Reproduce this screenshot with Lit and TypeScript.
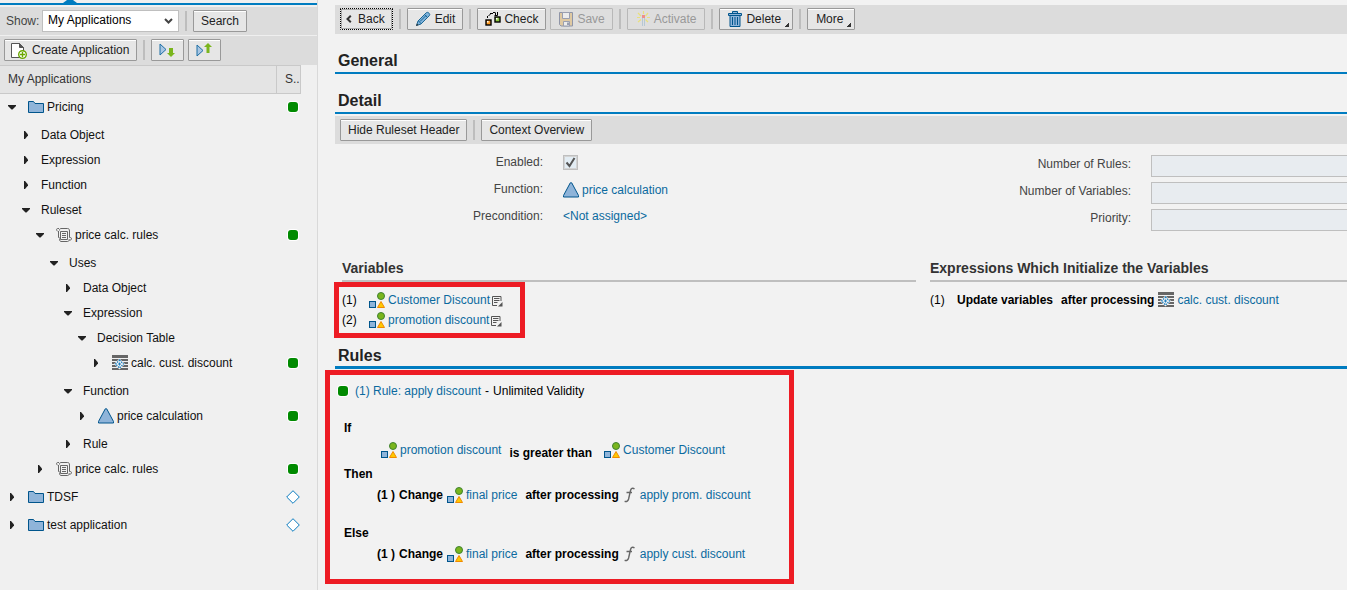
import { LitElement, html, css, svg, nothing, TemplateResult } from "lit";
import { customElement } from "lit/decorators.js";
import { classMap } from "lit/directives/class-map.js";
import { styleMap } from "lit/directives/style-map.js";

type IconName =
  | "folder" | "ruleset" | "table" | "triangle" | "shapes" | "note" | "func"
  | "newdoc" | "expand" | "collapse" | "back" | "pencil" | "check" | "save"
  | "wand" | "trash" | "diamond";

const glyphs: Record<IconName, { w: number; h: number; body: TemplateResult }> = {
  folder: { w: 16, h: 14, body: svg`
    <path d="M.5 12.500V1.500h5l1.500 2h8.500v9z" fill="#8fb4d9" stroke="#00558c"/>` },
  ruleset: { w: 16, h: 16, body: svg`
    <g fill="none" stroke="#666">
      <path d="M3.500 3.500c0-1.500.5-2 1.500-2h6.500c1.500 0 2 1 2 2.500v6.500M3 1.500H1.500c-1.200 0-1.200 2.500 0 2.500M2.500 4v6.500h1"/>
      <path d="M3.500 11.500c0 2 .5 3 1.500 3h6.500c1.500 0 1.500-1 1.500-2M13.500 10.500h1c1.300 0 1.300 2.500 0 2.500h-1.500"/>
      <path d="M4.500 4.500h7v8h-7z"/>
      <path d="M6 6.500h4M6 8.500h4M6 10.500h4"/>
    </g>` },
  table: { w: 16, h: 16, body: svg`
    <path d="M0 0h16v3H0zM0 4h16v2H0zM0 7h16v2H0zM0 10h16v2H0zM0 13h16v2H0z" fill="#666"/>
    <path d="M7.500 3.500l5.500 5.500-5.500 5.500L2 9z" fill="#f2f2f2"/>
    <path d="M7.500 5l4 4-4 4-4-4z" fill="none" stroke="#1c7fc0" stroke-width="1.300" stroke-dasharray="1.400 1"/>
    <path d="M7 7.500h1v1h1v1H8v1H7v-1H6v-1h1z" fill="#1c7fc0"/>` },
  triangle: { w: 16, h: 16, body: svg`
    <path d="M7.300.8h1.400L15.500 13.500v1.500H.5v-1.500z" fill="#8fb4d9" stroke="#00558c"/>` },
  shapes: { w: 16, h: 16, body: svg`
    <circle cx="12" cy="4" r="3.500" fill="#7ab51d" stroke="#3f8230"/>
    <rect x=".5" y="9.500" width="6" height="6" fill="#8fb4d9" stroke="#00558c"/>
    <path d="M12 9.500l3.500 6h-7z" fill="#ffc800" stroke="#f08a00"/>` },
  note: { w: 11, h: 11, body: svg`
    <path d="M5 9.500H.5v-9h8.500V5M2 2.500h5.500M2 4.500h5.500M2 6.500h3.500" fill="none" stroke="#555"/>
    <path d="M10.500 6v4.500H6z" fill="#555"/>` },
  func: { w: 11, h: 16, body: svg`
    <path d="M10.500 1.800C8.500.6 7 1.300 6.400 4L4.600 12c-.5 2-1.800 3-4 2.400M2.500 5.500h5.500" fill="none" stroke="#666" stroke-width="1.400"/>` },
  newdoc: { w: 17, h: 17, body: svg`
    <path d="M1.500 15.500V1.500h8l4 4v10z" fill="#fff" stroke="#555"/>
    <path d="M9.500 1.500l4 4h-4z" fill="#555" stroke="#555"/>
    <circle cx="12.500" cy="12.500" r="3.800" fill="#fff" stroke="#6aa800" stroke-width="1.400"/>
    <path d="M12.500 10v5M10 12.500h5" stroke="#6aa800" stroke-width="1.400"/>` },
  expand: { w: 16, h: 16, body: svg`
    <path d="M1 2l6 5.500L1 13z" fill="#a9c6e3" stroke="#1c6ea4"/>
    <path d="M10 6h4v5h2l-4 4-4-4h2z" fill="#7ab51d"/>` },
  collapse: { w: 16, h: 16, body: svg`
    <path d="M1 3l6 5.500L1 14z" fill="#a9c6e3" stroke="#1c6ea4"/>
    <path d="M10.500 11h3V5H16l-4-4-4 4h2.500z" fill="#7ab51d"/>` },
  back: { w: 6, h: 8, body: svg`
    <path d="M4.800.8L1.500 4l3.300 3.200" fill="none" stroke="#333" stroke-width="2"/>` },
  pencil: { w: 16, h: 16, body: svg`
    <path d="M1.500 14.500l1.500-4.500 8-8c1-1 2-.8 3 .2s1 1.800 0 2.800l-8 8z" fill="#7fb2da" stroke="#1b6796"/>
    <path d="M3.500 10l2.800 2.800M9.500 3.500l3 3M5 10.500l6-6" fill="none" stroke="#1b6796"/>
    <path d="M1 15l1-2.500L3.500 14z" fill="#333"/>` },
  check: { w: 16, h: 16, body: svg`
    <rect x="1" y="9" width="5" height="5" fill="#ff9a1f" stroke="#000" stroke-width="1.400"/>
    <rect x="10" y="6" width="5" height="5" fill="#8cc63f" stroke="#000" stroke-width="1.400"/>
    <path d="M2 10h1.500v1.500H2zM11 7h1.500v1.500H11z" fill="#fff"/>
    <path d="M2.500 7V5M3.500 4.500h1M4.500 3.500h1M5 2.500h3M8 1.500h2.500M10.500 2v2M12.500 1v3.500M9.500 4.500h3" fill="none" stroke="#000"/>` },
  save: { w: 16, h: 15, body: svg`
    <path d="M1.500.5h13v13.500H3L1.500 12.500z" fill="#dfc9a2" stroke="#8f95a8"/>
    <path d="M4.500.5h7v6h-7zM5.500 9.500h6v4.500h-6z" fill="#ececec" stroke="#9a9fb0"/>
    <path d="M9 10.500h2V13H9z" fill="#9a9fb0"/>` },
  wand: { w: 14, h: 16, body: svg`
    <path d="M6.500 7v8M8.500 7v8" stroke="#b5c8d4"/>
    <path d="M2 2l3 3M12 2L9.500 5M7.500 0v3M1 6.500h3M11 6.500h3M2 11l3-2.500M12 11l-2.500-2.500" stroke="#e9e07c" stroke-width="1.200"/>
    <path d="M6 4h3v3H6z" fill="#ee8f8a"/>` },
  trash: { w: 14, h: 16, body: svg`
    <path d="M4.500 2.500v-2h5v2M.5 2.500h13v2H.5zM2 5v10.500h10V5" fill="#8fb4d9" stroke="#00558c"/>
    <path d="M4.500 6v8M7 6v8M9.500 6v8" stroke="#00558c"/>` },
  diamond: { w: 14, h: 14, body: svg`
    <path d="M7 .7L13.300 7 7 13.300.7 7z" fill="#fff" stroke="#0a7cc0"/>` },
};

const icon = (name: IconName) => {
  const g = glyphs[name];
  return html`<svg class="icon" width=${g.w} height=${g.h} viewBox="0 0 ${g.w} ${g.h}" aria-hidden="true">${g.body}</svg>`;
};

interface Node {
  label: string;
  level: number;
  open?: boolean;
  icon?: IconName;
  status?: "active" | "inactive";
}

const tree: Node[] = [
  { label: "Pricing", level: 0, open: true, icon: "folder", status: "active" },
  { label: "Data Object", level: 1 },
  { label: "Expression", level: 1 },
  { label: "Function", level: 1 },
  { label: "Ruleset", level: 1, open: true },
  { label: "price calc. rules", level: 2, open: true, icon: "ruleset", status: "active" },
  { label: "Uses", level: 3, open: true },
  { label: "Data Object", level: 4 },
  { label: "Expression", level: 4, open: true },
  { label: "Decision Table", level: 5, open: true },
  { label: "calc. cust. discount", level: 6, icon: "table", status: "active" },
  { label: "Function", level: 4, open: true },
  { label: "price calculation", level: 5, icon: "triangle", status: "active" },
  { label: "Rule", level: 4 },
  { label: "price calc. rules", level: 2, icon: "ruleset", status: "active" },
  { label: "TDSF", level: 0, icon: "folder", status: "inactive" },
  { label: "test application", level: 0, icon: "folder", status: "inactive" },
];

const base = css`
  :host {
    font-family: "Liberation Sans", Arial, sans-serif;
    font-size: 12px;
    color: #222;
  }
  * { box-sizing: border-box; }
  .icon { display: block; flex: none; }
  .toolbar {
    display: flex;
    align-items: center;
    background: #dcdcdc;
  }
  .sep {
    width: 2px;
    height: 20px;
    margin: 0 6px;
    background: #bdbdbd;
  }
  .btn {
    display: flex;
    align-items: center;
    gap: 3px;
    height: 22px;
    padding: 0 7px;
    font: inherit;
    line-height: 14px;
    color: #222;
    white-space: nowrap;
    background: #e6e6e6;
    border: 1px solid #999;
    border-radius: 1px;
    box-shadow: inset 0 1px #fff;
  }
  .btn + .btn { margin-left: 4px; }
  .btn:disabled {
    color: #999;
    background: #dedede;
    border-color: #b8b8b8;
    box-shadow: none;
  }
  .dot {
    display: block;
    flex: none;
    width: 10px;
    height: 10px;
    border-radius: 3px;
    background: #008a00;
    box-shadow: 0 0 0 1px #fff;
  }
`;

@customElement("app-navigator")
export class AppNavigator extends LitElement {
  static styles = [base, css`
    :host {
      display: block;
      background: #f0f0f0;
      border-right: 1px solid #d9d9d9;
    }
    .tabline {
      height: 5px;
      padding-left: 63px;
      border-bottom: 2px solid #007cc0;
    }
    .pointer { display: block; fill: #007cc0; }
    .filter { margin-top: 2px; padding: 3px 6px; }
    .actions {
      padding: 3px 4px 4px;
      border-top: 1px solid #efefef;
    }
    .label { width: 36px; color: #444; }
    .picker {
      display: grid;
      align-items: center;
      width: 137px;
    }
    .picker > * { grid-area: 1 / 1; }
    .select {
      appearance: none;
      width: 100%;
      height: 22px;
      padding: 0 5px 2px;
      font: inherit;
      color: #000;
      background: #fff;
      border: 1px solid #bfbfbf;
      border-radius: 0;
    }
    .chevron {
      justify-self: end;
      margin-right: 6px;
      pointer-events: none;
    }
    .create { padding: 0 7px 0 5px; gap: 5px; }
    .tool { padding: 0 8px 0 7px; }
    .tree {
      width: 301px;
      table-layout: fixed;
      border-collapse: separate;
      border-spacing: 0;
    }
    .head {
      height: 29px;
      padding: 0 0 2px 8px;
      font-weight: normal;
      text-align: left;
      color: #333;
      background: #e4e4e4;
      border: solid #c9c9c9;
      border-width: 1px 1px 1px 0;
    }
    .head.status { width: 24px; }
    .cell { padding: 5px 0 4px; }
    .big .cell { padding-bottom: 7px; }
    .item {
      display: flex;
      align-items: center;
      height: 16px;
      white-space: nowrap;
      color: #111;
    }
    .item .icon { margin: 0 3px 0 1px; }
    .twisty {
      display: flex;
      justify-content: center;
      align-items: center;
      width: 12px;
      height: 12px;
      margin-right: 9px;
      padding: 0;
      border: 0;
      background: none;
    }
    .mark {
      display: flex;
      align-items: center;
      justify-content: center;
      height: 16px;
      padding-left: 8px;
    }
  `];

  private row(n: Node) {
    return html`
      <tr class=${classMap({ big: !!n.icon })} aria-level=${n.level + 1}>
        <td class="cell">
          <div class="item" style=${styleMap({ paddingLeft: `${6 + 14 * n.level}px` })}>
            <button class="twisty" aria-expanded=${n.open ? "true" : "false"} aria-label=${n.label}>
              ${n.open
                ? html`<svg width="8" height="5" viewBox="0 0 8 5"><path d="M0 0h8v1L4.500 4.500h-1L0 1z" fill="#222"/></svg>`
                : html`<svg width="4" height="8" viewBox="0 0 4 8"><path d="M0 0h1l3 3.500v1L1 8H0z" fill="#222"/></svg>`}
            </button>
            ${n.icon ? icon(n.icon) : nothing}<span>${n.label}</span>
          </div>
        </td>
        <td class="cell">
          <div class="mark">
            ${n.status === "active" ? html`<span class="dot"></span>` : nothing}
            ${n.status === "inactive" ? icon("diamond") : nothing}
          </div>
        </td>
      </tr>`;
  }

  render() {
    return html`
      <div class="tabline">
        <svg class="pointer" width="14" height="3" viewBox="0 0 14 3"><path d="M4 0h6l4 3H0z"/></svg>
      </div>
      <div class="toolbar filter">
        <label class="label" for="scope">Show:</label>
        <span class="picker">
          <select class="select" id="scope"><option>My Applications</option></select>
          <svg class="chevron" width="9" height="6" viewBox="0 0 9 6"><path d="M1 1l3.500 3.500L8 1" fill="none" stroke="#444" stroke-width="2"/></svg>
        </span>
        <span class="sep"></span>
        <button class="btn">Search</button>
      </div>
      <div class="toolbar actions">
        <button class="btn create">${icon("newdoc")}Create Application</button>
        <span class="sep"></span>
        <button class="btn tool" aria-label="Expand">${icon("expand")}</button>
        <button class="btn tool" aria-label="Collapse">${icon("collapse")}</button>
      </div>
      <table class="tree">
        <thead>
          <tr><th class="head">My Applications</th><th class="head status">S..</th></tr>
        </thead>
        <tbody>${tree.map((n) => this.row(n))}</tbody>
      </table>`;
  }
}

@customElement("ruleset-editor")
export class RulesetEditor extends LitElement {
  static styles = [base, css`
    :host {
      display: block;
      min-width: 0;
      padding: 5px 0 6px 17px;
      background: #f2f2f2;
    }
    .main { padding: 3px 5px 4px; }
    .sub { margin-top: 2px; padding: 3px 5px; }
    .focused {
      border: 1px dotted #000;
      outline: 1px solid #aaa;
      outline-offset: -2px;
    }
    .back { padding: 0 7px 0 5px; gap: 6px; }
    .menu {
      padding: 0 11px 0 8px;
      background: linear-gradient(135deg, transparent 50%, #333 50%) right 3px bottom 2px / 5px 5px no-repeat #e6e6e6;
    }
    .menu .icon { margin-right: 1px; }
    .edit .icon { margin-right: 1px; }
    .wand { padding: 0 8px; gap: 4px; }
    .title {
      margin: 18px 0 0;
      padding: 0 3px 2px;
      font-size: 16px;
      line-height: 18px;
      border-bottom: 2px solid #007cc0;
    }
    .title.strong {
      margin-top: 9px;
      padding-bottom: 1px;
      border-bottom-width: 3px;
    }
    .split {
      display: grid;
      grid-template-columns: minmax(0, 595fr) minmax(0, 417fr);
    }
    .form { padding-top: 11px; }
    .field {
      display: flex;
      align-items: flex-start;
      gap: 20px;
      height: 27px;
    }
    .name {
      flex: none;
      width: 208px;
      line-height: 14px;
      text-align: right;
      color: #444;
    }
    .right .name { width: 201px; line-height: 18px; }
    .tick {
      appearance: none;
      width: 15px;
      height: 15px;
      margin: 0;
      border: 1px solid #bfbfbf;
      outline: 1px solid #d4d4d4;
      outline-offset: -2px;
      background: #e3edf4;
    }
    .ticker { display: grid; }
    .ticker > * { grid-area: 1 / 1; }
    .box {
      flex: 1;
      min-width: 0;
      height: 22px;
      padding: 0 4px;
      font: inherit;
      background: #e8ecf0;
      border: solid #bfbfbf;
      border-width: 1px 0 1px 1px;
      border-radius: 0;
    }
    .subtitle {
      margin: 23px 0 0;
      padding-bottom: 3px;
      font-size: 14px;
      line-height: 18px;
      color: #333;
      border-bottom: 2px solid #bfbfbf;
    }
    .variables { margin: 0 14px 0 7px; }
    .list {
      margin: 0;
      padding: 8px 0 0;
      list-style: none;
      color: #000;
    }
    .boxed { border: 5px solid #ed1c24; }
    .list.boxed {
      width: 191px;
      margin-left: -8px;
      padding: 3px;
    }
    .line {
      display: flex;
      align-items: center;
      height: 20px;
      white-space: nowrap;
      color: #000;
    }
    .num { width: 27px; }
    .link {
      display: flex;
      align-items: center;
      gap: 3px;
      line-height: 14px;
      color: #0b6a9f;
      text-decoration: none;
    }
    .note {
      margin-left: 2px;
      padding: 3px 0 0;
      border: 0;
      background: none;
    }
    .bold { font-weight: bold; }
    .subject { margin-right: 8px; }
    .via { margin-right: 4px; }
    .rules {
      width: 469px;
      margin: 1px 0 0 -10px;
      padding: 6px 8px 15px;
    }
    .rule { gap: 4px; }
    .rule .dot { margin-right: 3px; }
    .keyword {
      margin: 0;
      padding-left: 6px;
      font-size: 12px;
      line-height: 20px;
      color: #000;
    }
    .if { margin-top: 17px; }
    .then { margin-top: 4px; }
    .else { margin-top: 18px; }
    .cond {
      align-items: flex-end;
      gap: 12px;
      margin-top: 2px;
      padding-left: 43px;
      line-height: 14px;
    }
    .cond .link { height: 20px; }
    .cond .bold { margin-left: -4px; }
    .action {
      gap: 4px;
      margin-top: 1px;
      padding-left: 39px;
    }
    .action .after { margin: 0 1px 0 4px; }
    .action .fn { gap: 5px; }
  `];

  private link(label: string, glyph?: IconName, extra = "") {
    return html`<a class="link ${extra}" href="#">${glyph ? icon(glyph) : nothing}<span>${label}</span></a>`;
  }

  private readonlyField(id: string, label: string) {
    return html`
      <div class="field">
        <label class="name" for=${id}>${label}</label>
        <input class="box" id=${id} type="text" readonly>
      </div>`;
  }

  private variable(index: number, label: string) {
    return html`
      <li class="line">
        <span class="num">(${index})</span>${this.link(label, "shapes")}
        <button class="note" aria-label="Options">${icon("note")}</button>
      </li>`;
  }

  private action(target: string) {
    return html`
      <div class="line action">
        <span class="bold">(1 )</span>
        <span class="bold">Change</span>
        ${this.link("final price", "shapes")}
        <span class="bold after">after processing</span>
        ${this.link(target, "func", "fn")}
      </div>`;
  }

  render() {
    return html`
      <div class="toolbar main">
        <button class="btn back focused">${icon("back")}Back</button>
        <span class="sep"></span>
        <button class="btn edit">${icon("pencil")}Edit</button>
        <span class="sep"></span>
        <button class="btn">${icon("check")}Check</button>
        <button class="btn" disabled>${icon("save")}Save</button>
        <span class="sep"></span>
        <button class="btn wand" disabled>${icon("wand")}Activate</button>
        <span class="sep"></span>
        <button class="btn menu">${icon("trash")}Delete</button>
        <span class="sep"></span>
        <button class="btn menu">More</button>
      </div>
      <h2 class="title">General</h2>
      <h2 class="title">Detail</h2>
      <div class="toolbar sub">
        <button class="btn">Hide Ruleset Header</button>
        <span class="sep"></span>
        <button class="btn">Context Overview</button>
      </div>
      <div class="split form">
        <div>
          <div class="field">
            <label class="name" for="enabled">Enabled:</label>
            <span class="ticker">
              <input class="tick" id="enabled" type="checkbox" checked disabled>
              <svg class="icon" width="15" height="15" viewBox="0 0 15 15" aria-hidden="true"><path d="M3.500 7.500l3 3.500 5-8" fill="none" stroke="#555" stroke-width="2"/></svg>
            </span>
          </div>
          <div class="field">
            <span class="name">Function:</span>
            ${this.link("price calculation", "triangle")}
          </div>
          <div class="field">
            <span class="name">Precondition:</span>
            ${this.link("<Not assigned>")}
          </div>
        </div>
        <div class="right">
          ${this.readonlyField("rules", "Number of Rules:")}
          ${this.readonlyField("vars", "Number of Variables:")}
          ${this.readonlyField("prio", "Priority:")}
        </div>
      </div>
      <div class="split">
        <section class="variables">
          <h3 class="subtitle">Variables</h3>
          <ul class="list boxed">
            ${this.variable(1, "Customer Discount")}
            ${this.variable(2, "promotion discount")}
          </ul>
        </section>
        <section>
          <h3 class="subtitle">Expressions Which Initialize the Variables</h3>
          <ul class="list">
            <li class="line">
              <span class="num">(1)</span>
              <span class="bold subject">Update variables</span>
              <span class="bold via">after processing</span>
              ${this.link("calc. cust. discount", "table")}
            </li>
          </ul>
        </section>
      </div>
      <h2 class="title strong">Rules</h2>
      <section class="rules boxed">
        <div class="line rule">
          <span class="dot"></span>
          ${this.link("(1) Rule: apply discount")}
          <span>-</span>
          <span>Unlimited Validity</span>
        </div>
        <h4 class="keyword if">If</h4>
        <div class="line cond">
          ${this.link("promotion discount", "shapes")}
          <span class="bold">is greater than</span>
          ${this.link("Customer Discount", "shapes")}
        </div>
        <h4 class="keyword then">Then</h4>
        ${this.action("apply prom. discount")}
        <h4 class="keyword else">Else</h4>
        ${this.action("apply cust. discount")}
      </section>`;
  }
}

@customElement("app-root")
export class AppRoot extends LitElement {
  static styles = css`
    :host {
      display: grid;
      grid-template-columns: 318px minmax(0, 1fr);
      min-height: 100vh;
      background: #f2f2f2;
    }
  `;

  render() {
    return html`<app-navigator></app-navigator><ruleset-editor></ruleset-editor>`;
  }
}
